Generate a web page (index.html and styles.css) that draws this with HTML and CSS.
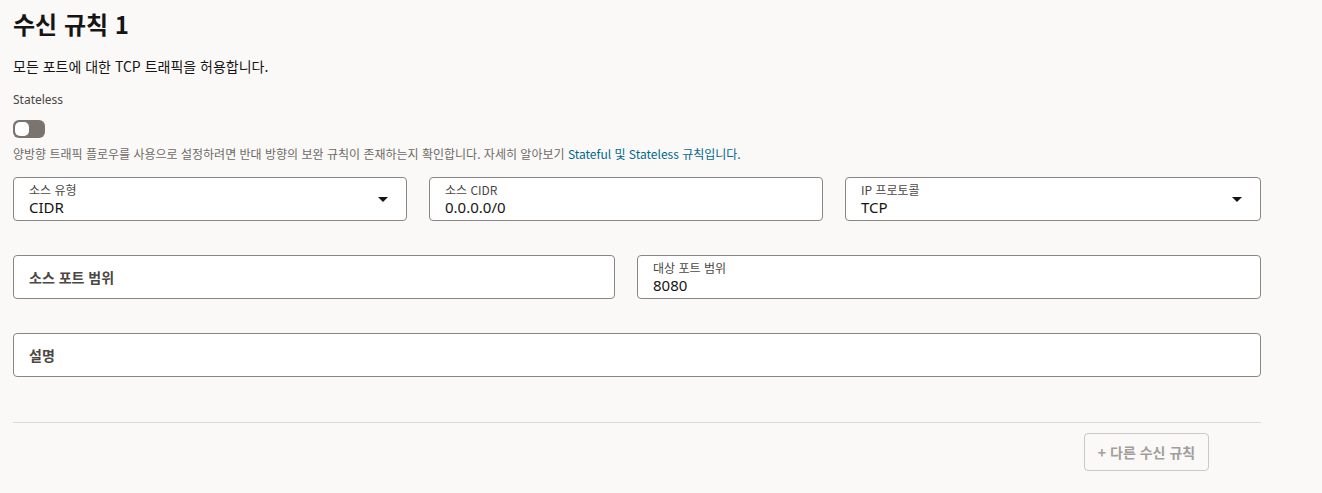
FILE: index.html
```html
<!DOCTYPE html>
<html lang="ko">
<head>
<meta charset="utf-8">
<link rel="stylesheet" href="styles.css">
</head>
<body>
<div class="page">
  <h1 class="title">수신 규칙 1</h1>
  <p class="desc">모든 포트에 대한 TCP 트래픽을 허용합니다.</p>
  <div class="sl-label">Stateless</div>
  <div class="toggle"><span class="knob"></span></div>
  <p class="help">양방향 트래픽 플로우를 사용으로 설정하려면 반대 방향의 보완 규칙이 존재하는지 확인합니다. 자세히 알아보기 <a class="link" href="#">Stateful 및 Stateless 규칙입니다.</a></p>

  <div class="row row1">
    <div class="field select">
      <div class="f-text"><div class="f-label">소스 유형</div><div class="f-value">CIDR</div></div>
      <span class="caret"></span>
    </div>
    <div class="field">
      <div class="f-text"><div class="f-label">소스 CIDR</div><div class="f-value">0.0.0.0/0</div></div>
    </div>
    <div class="field select">
      <div class="f-text"><div class="f-label">IP 프로토콜</div><div class="f-value">TCP</div></div>
      <span class="caret"></span>
    </div>
  </div>

  <div class="row row2">
    <div class="field">
      <div class="f-text"><div class="f-placeholder">소스 포트 범위</div></div>
    </div>
    <div class="field">
      <div class="f-text"><div class="f-label">대상 포트 범위</div><div class="f-value">8080</div></div>
    </div>
  </div>

  <div class="row row3">
    <div class="field">
      <div class="f-text"><div class="f-placeholder">설명</div></div>
    </div>
  </div>

  <div class="footer">
    <button class="add-btn" type="button">+ 다른 수신 규칙</button>
  </div>
</div>
</body>
</html>
```

FILE: styles.css
```css
html, body {
  margin: 0;
  padding: 0;
  background: #faf9f8;
}
body {
  font-family: "Noto Sans", "Noto Sans CJK KR", sans-serif;
  color: #161513;
}
.page {
  width: 1248px;
  padding: 6px 0 0 13px;
}
.title {
  margin: 0;
  font-size: 24px;
  font-weight: 700;
  line-height: 36px;
  font-family: "Noto Sans CJK KR", sans-serif;
}
.desc {
  margin: 14px 0 0;
  font-size: 14px;
  line-height: 20px;
  font-family: "Noto Sans CJK KR", sans-serif;
}
.sl-label {
  margin-top: 16px;
  font-size: 12px;
  line-height: 16px;
  color: #4b4744;
}
.toggle {
  margin-top: 12px;
  width: 32px;
  height: 18px;
  border-radius: 6px;
  background: #7a736e;
  display: flex;
  align-items: center;
  padding: 0 2px;
  box-sizing: border-box;
}
.knob {
  width: 14px;
  height: 14px;
  border-radius: 5px;
  background: #ffffff;
}
.help {
  margin: 8px 0 0;
  font-size: 12px;
  line-height: 16px;
  color: #6f6a66;
  font-family: "Noto Sans CJK KR", sans-serif;
}
.link {
  color: #00688c;
  text-decoration: none;
}
.row {
  display: grid;
  gap: 22px;
}
.row1 {
  margin-top: 15px;
  grid-template-columns: 394px 394px 1fr;
}
.row2 {
  margin-top: 34px;
  grid-template-columns: 602px 1fr;
}
.row3 {
  margin-top: 34px;
  grid-template-columns: 1fr;
}
.field {
  height: 44px;
  box-sizing: border-box;
  border: 1px solid #8a8683;
  border-radius: 4px;
  background: #ffffff;
  display: flex;
  align-items: center;
  padding: 0 15px;
}
.f-text {
  flex: 1;
  display: flex;
  flex-direction: column;
}
.f-label {
  font-size: 12px;
  line-height: 16px;
  color: #4b4744;
  font-family: "Noto Sans CJK KR", sans-serif;
}
.f-value {
  font-size: 15px;
  line-height: 19px;
  color: #161513;
}
.f-placeholder {
  font-size: 14px;
  font-weight: 700;
  color: #4b4744;
  font-family: "Noto Sans CJK KR", sans-serif;
}
.caret {
  width: 0;
  height: 0;
  border-left: 5px solid transparent;
  border-right: 5px solid transparent;
  border-top: 5px solid #161513;
  margin-right: 3px;
}
.footer {
  margin-top: 45px;
  border-top: 1px solid #dcdad8;
  display: flex;
  justify-content: flex-end;
  padding: 10px 52px 0 0;
}
.add-btn {
  height: 38px;
  width: 125px;
  border: 1px solid #cbc8c5;
  border-radius: 4px;
  background: transparent;
  color: #a29e9a;
  font-size: 14px;
  font-weight: 700;
  font-family: "Noto Sans CJK KR", sans-serif;
  padding: 0;
}
```
